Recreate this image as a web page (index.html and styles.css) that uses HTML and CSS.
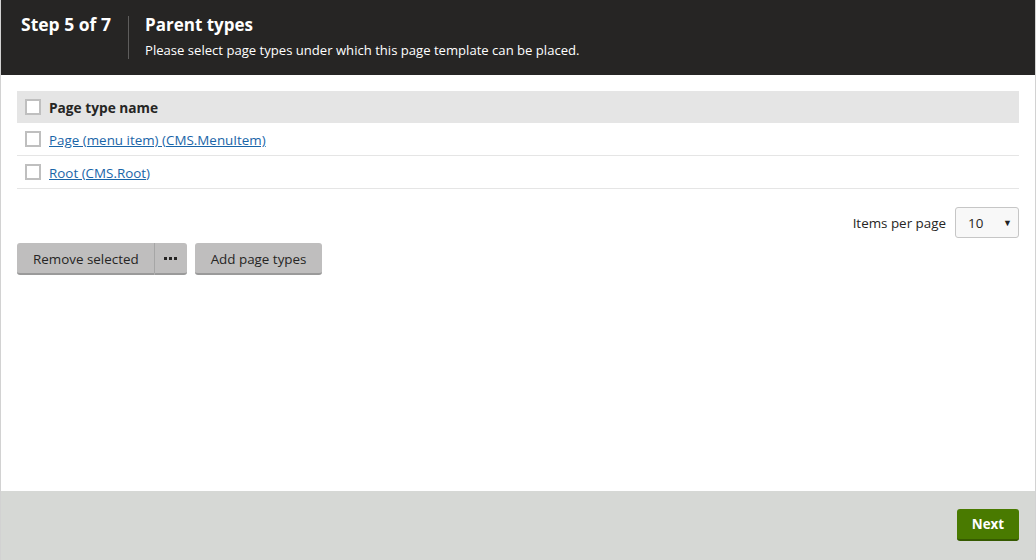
FILE: index.html
```html
<!DOCTYPE html>
<html>
<head>
<meta charset="utf-8">
<link rel="stylesheet" href="styles.css">
</head>
<body>
<div class="frame">
  <header class="wizard-header">
    <div class="step">Step 5 of 7</div>
    <div class="step-info">
      <div class="step-title">Parent types</div>
      <div class="step-desc">Please select page types under which this page template can be placed.</div>
    </div>
  </header>
  <main class="content">
    <div class="grid">
      <div class="grid-row grid-head">
        <span class="cb"></span>
        <span class="col-name">Page type name</span>
      </div>
      <div class="grid-row">
        <span class="cb"></span>
        <a class="link" href="#">Page (menu item) (CMS.MenuItem)</a>
      </div>
      <div class="grid-row">
        <span class="cb"></span>
        <a class="link" href="#">Root (CMS.Root)</a>
      </div>
    </div>
    <div class="pager">
      <span class="pager-label">Items per page</span>
      <div class="select"><span>10</span><span class="caret">&#9660;</span></div>
    </div>
    <div class="actions">
      <div class="btn-group">
        <button class="btn">Remove selected</button>
        <button class="btn btn-more"><span class="dots"><i></i><i></i><i></i></span></button>
      </div>
      <button class="btn">Add page types</button>
    </div>
  </main>
  <footer class="wizard-footer">
    <button class="btn-primary">Next</button>
  </footer>
</div>
</body>
</html>
```
FILE: styles.css
```css
* { box-sizing: border-box; }
html, body { margin: 0; padding: 0; height: 100%; }
body {
  font-family: "Open Sans", "Noto Sans", sans-serif;
  font-size: 13.4px;
  color: #262524;
  background: #fff;
}
.frame {
  height: 560px;
  display: flex;
  flex-direction: column;
  border-left: 1px solid #d2d2d2;
  border-right: 1px solid #d2d2d2;
}
.wizard-header {
  height: 75px;
  background: #262524;
  color: #fff;
  display: flex;
  align-items: flex-start;
  padding-top: 16px;
}
.step {
  width: 128px;
  height: 43px;
  padding-left: 20px;
  font-size: 17.5px;
  font-weight: 700;
  line-height: 17px;
  border-right: 1px solid #5e5d5c;
}
.step-info { padding-left: 16px; }
.step-title {
  font-size: 17px;
  font-weight: 700;
  line-height: 17px;
}
.step-desc {
  margin-top: 9px;
  font-size: 13.1px;
  line-height: 16px;
}
.content {
  flex: 1;
  padding: 16px 16px 0 16px;
}
.grid-row {
  display: flex;
  align-items: center;
  height: 33px;
  padding-left: 8px;
  border-bottom: 1px solid #e5e5e5;
}
.grid-head {
  height: 32px;
  background: #e5e5e5;
  border-bottom: none;
  font-weight: 700;
}
.col-name { font-size: 13.7px; }
.cb {
  width: 16px;
  height: 16px;
  border: 2px solid #bfbfbf;
  background: #fff;
  margin-right: 8px;
  flex: none;
}
.link {
  color: #1a65a8;
  text-decoration: underline;
  padding-top: 1px;
}
.pager {
  display: flex;
  justify-content: flex-end;
  align-items: center;
  margin-top: 18px;
  gap: 9px;
}
.select {
  width: 64px;
  height: 31px;
  border: 1px solid #c6c6c6;
  border-radius: 3px;
  background: #f8f8f8;
  display: flex;
  align-items: center;
  justify-content: space-between;
  padding: 0 6px 0 12px;
}
.caret { font-size: 9px; color: #222; }
.actions {
  display: flex;
  gap: 8px;
  margin-top: 5px;
}
.btn-group { display: flex; }
.btn {
  font-family: inherit;
  font-size: 13.4px;
  color: #262524;
  background: #bfbebe;
  border: none;
  border-bottom: 2px solid #9a9a9a;
  border-radius: 3px;
  height: 32px;
  padding: 1px 16px 0;
}
.btn-group .btn:first-child {
  border-radius: 3px 0 0 3px;
  border-right: 1px solid #a6a6a6;
  padding: 1px 15px 0 16px;
}
.btn-more {
  border-radius: 0 3px 3px 0;
  width: 32px;
  padding: 0;
  display: flex;
  align-items: center;
  justify-content: center;
}
.dots { display: flex; gap: 2px; }
.dots i { width: 3px; height: 3px; background: #262524; display: block; }
.wizard-footer {
  height: 69px;
  background: #d6d8d5;
  display: flex;
  justify-content: flex-end;
  align-items: flex-start;
  padding: 18px 16px 0 0;
}
.btn-primary {
  font-family: inherit;
  font-size: 13.4px;
  font-weight: 700;
  color: #fff;
  background: #497a00;
  border: none;
  border-bottom: 2px solid #365a00;
  border-radius: 3px;
  width: 62px;
  height: 32px;
}
```
